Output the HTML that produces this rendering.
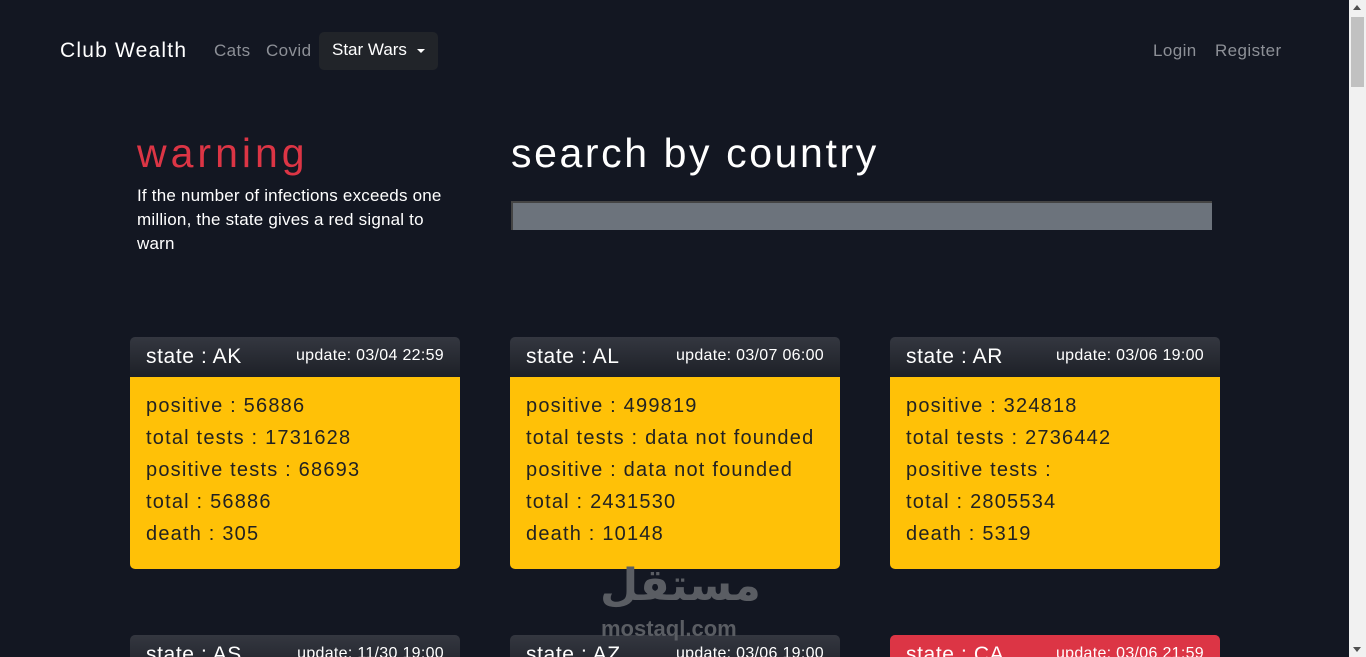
<!DOCTYPE html>
<html><head><meta charset="utf-8"><style>
*{box-sizing:border-box;margin:0;padding:0}
html{width:1366px;height:657px;overflow:hidden}
body{width:1366px;height:657px;overflow:hidden;background:#131722;font-family:"Liberation Sans",sans-serif;position:relative}
.sb{position:absolute;right:0;top:0;width:17px;height:657px;background:#f1f1f1}
.sb .th{position:absolute;left:2px;top:17px;width:13px;height:70px;background:#c1c1c1}
.sb .up{position:absolute;left:4px;top:5px;width:0;height:0;border:4px solid transparent;border-bottom:5px solid #505050;border-top:0}
.sb .dn{position:absolute;left:4px;bottom:5px;width:0;height:0;border:4px solid transparent;border-top:5px solid #505050;border-bottom:0}
.nav a{position:absolute;font-size:17px;color:#8d9097;top:41px;letter-spacing:0.4px}
.brand{position:absolute;left:60px;top:39px;font-size:21px;color:#fff;letter-spacing:1.2px}
.sw{position:absolute;left:319px;top:32px;width:119px;height:38px;background:#212429;border-radius:5px;color:#fff;font-size:17px;padding:8px 0 0 13px}
.sw:after{content:"";position:absolute;left:98px;top:17px;border:4px solid transparent;border-top:4px solid #fff;border-bottom:0}
h1{position:absolute;font-weight:normal;font-size:41px}
.p{position:absolute;left:137px;top:184px;width:340px;color:#fff;font-size:17px;line-height:24px;letter-spacing:0.2px}
.inp{position:absolute;left:511px;top:201px;width:701px;height:29px;background:#6c737c;border-top:2px solid #444;border-left:2px solid #444}
.card{position:absolute;width:330px;border-radius:5px;overflow:hidden}
.hd{height:40px;background:linear-gradient(#343740,#1d2027);color:#fff;position:relative}
.hd .s{position:absolute;left:16px;top:8px;font-size:21px;letter-spacing:0.6px}
.hd .u{position:absolute;right:16px;top:10px;font-size:16px;letter-spacing:0.3px}
.bd{background:#ffc107;height:192px;padding:13px 16px;color:#222;font-size:20px;line-height:32px;letter-spacing:1.2px}
.red .hd{background:#dc3545}
</style></head><body>
<div class="brand">Club Wealth</div>
<div class="nav"><a style="left:214px">Cats</a><a style="left:266px">Covid</a><a style="left:1153px">Login</a><a style="left:1215px">Register</a></div>
<div class="sw">Star Wars</div>
<h1 style="left:137px;top:130px;color:#dc3545;letter-spacing:4px">warning</h1>
<h1 style="left:511px;top:130px;color:#fff;letter-spacing:2.6px">search by country</h1>
<div class="p">If the number of infections exceeds one<br>million, the state gives a red signal to<br>warn</div>
<div class="inp"></div>

<div class="card" style="left:130px;top:337px"><div class="hd"><span class="s">state : AK</span><span class="u">update: 03/04 22:59</span></div><div class="bd">positive : 56886<br>total tests : 1731628<br>positive tests : 68693<br>total : 56886<br>death : 305</div></div>
<div class="card" style="left:510px;top:337px"><div class="hd"><span class="s">state : AL</span><span class="u">update: 03/07 06:00</span></div><div class="bd">positive : 499819<br>total tests : data not founded<br>positive : data not founded<br>total : 2431530<br>death : 10148</div></div>
<div class="card" style="left:890px;top:337px"><div class="hd"><span class="s">state : AR</span><span class="u">update: 03/06 19:00</span></div><div class="bd">positive : 324818<br>total tests : 2736442<br>positive tests :<br>total : 2805534<br>death : 5319</div></div>

<div class="card" style="left:130px;top:635px"><div class="hd"><span class="s">state : AS</span><span class="u">update: 11/30 19:00</span></div></div>
<div class="card" style="left:510px;top:635px"><div class="hd"><span class="s">state : AZ</span><span class="u">update: 03/06 19:00</span></div></div>
<div class="card red" style="left:890px;top:635px"><div class="hd"><span class="s">state : CA</span><span class="u">update: 03/06 21:59</span></div></div>

<div style="position:absolute;left:600px;top:560px;color:#5a5d63;font-size:44px;font-weight:bold;font-family:'DejaVu Sans',sans-serif">مستقل</div>
<div style="position:absolute;left:601px;top:616px;color:#5a5d63;font-size:22px;font-weight:bold">mostaql.com</div>
<div class="sb"><div class="up"></div><div class="th"></div><div class="dn"></div></div>
</body></html>
